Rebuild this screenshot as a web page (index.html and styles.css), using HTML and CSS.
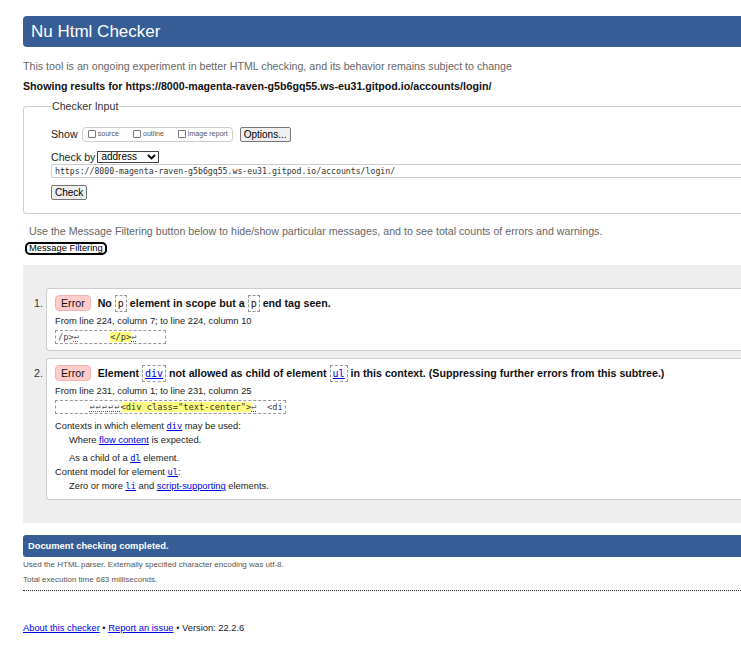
FILE: index.html
```html
<!DOCTYPE html>
<html lang="en">
<head>
<meta charset="utf-8">
<title>Nu Html Checker</title>
<link rel="stylesheet" href="styles.css">
</head>
<body>
<div class="page">
  <h1 class="banner">Nu Html Checker</h1>
  <p class="intro">This tool is an ongoing experiment in better HTML checking, and its behavior remains subject to change</p>
  <p class="showing">Showing results for https://8000-magenta-raven-g5b6gq55.ws-eu31.gitpod.io/accounts/login/</p>

  <form class="checker-form">
    <fieldset class="checker">
      <legend>Checker Input</legend>
      <div class="row show-row">
        <span class="label">Show</span>
        <span class="opts">
          <span class="opt"><span class="cb"></span>source</span>
          <span class="opt"><span class="cb"></span>outline</span>
          <span class="opt"><span class="cb"></span>image report</span>
        </span>
        <button type="button" class="btn">Options...</button>
      </div>
      <div class="row by-row">
        <span class="label">Check by</span>
        <span class="select">address<svg class="chev" width="9" height="6" viewBox="0 0 9 6"><polyline points="1,1 4.5,4.5 8,1" fill="none" stroke="#000" stroke-width="1.8"/></svg></span>
      </div>
      <div class="url">https://8000-magenta-raven-g5b6gq55.ws-eu31.gitpod.io/accounts/login/</div>
      <div class="check-row"><button type="button" class="btn">Check</button></div>
    </fieldset>
  </form>

  <p class="filter-note">Use the Message Filtering button below to hide/show particular messages, and to see total counts of errors and warnings.</p>
  <button type="button" class="filter-btn">Message Filtering</button>

  <div class="results">
    <ol class="messages">
      <li class="msg">
        <span class="num">1.</span>
        <div class="box">
          <p class="title"><strong class="badge">Error</strong> No <code class="q">p</code> element in scope but a <code class="q">p</code> end tag seen.</p>
          <p class="loc">From line 224, column 7; to line 224, column 10</p>
          <p class="extract"><code>/p&gt;<span class="lf">↩</span>      <b class="hl">&lt;/p&gt;</b><span class="lf">↩</span>     </code></p>
        </div>
      </li>
      <li class="msg">
        <span class="num">2.</span>
        <div class="box">
          <p class="title"><strong class="badge">Error</strong> Element <a class="q" href="#">div</a> not allowed as child of element <a class="q" href="#">ul</a> in this context. (Suppressing further errors from this subtree.)</p>
          <p class="loc">From line 231, column 1; to line 231, column 25</p>
          <p class="extract"><code>      <span class="lf arrows">↩↩↩↩↩</span><b class="hl">&lt;div class="text-center"&gt;</b><span class="lf">↩</span>  &lt;di</code></p>
          <dl class="ctx">
            <dt>Contexts in which element <a class="mono" href="#">div</a> may be used:</dt>
            <dd>Where <a href="#">flow content</a> is expected.</dd>
            <dd class="gap">As a child of a <a class="mono" href="#">dl</a> element.</dd>
            <dt>Content model for element <a class="mono" href="#">ul</a>:</dt>
            <dd>Zero or more <a class="mono" href="#">li</a> and <a href="#">script-supporting</a> elements.</dd>
          </dl>
        </div>
      </li>
    </ol>
  </div>

  <h2 class="status">Document checking completed.</h2>
  <div class="details">
    <p>Used the HTML parser. Externally specified character encoding was utf-8.</p>
    <p class="second">Total execution time 683 milliseconds.</p>
  </div>

  <p class="footer"><a href="#">About this checker</a> • <a href="#">Report an issue</a> • Version: 22.2.6</p>
</div>
</body>
</html>
```

FILE: styles.css
```css
html {
  overflow: hidden;
}

body {
  margin: 0;
  font-family: "Liberation Sans", Arial, sans-serif;
  font-size: 10.67px;
  color: #222;
  background: #fff;
}

.page {
  margin-left: 23px;
  width: 780px;
}

a {
  color: #0000ee;
}

.banner {
  margin: 16px 0 0;
  height: 31px;
  line-height: 31px;
  padding-left: 8px;
  background: #365d95;
  color: #fff;
  font-size: 17px;
  font-weight: normal;
  border-radius: 4px;
}

.intro {
  margin: 13px 0 0;
  line-height: 12px;
  color: #666;
}

.showing {
  margin: 8px 0 0;
  line-height: 12px;
  font-weight: bold;
  color: #111;
}

.checker-form {
  margin: 8px 0 0;
}

.checker {
  margin: 0;
  min-width: 0;
  padding: 13px 0 13px 27px;
  border: 1px solid #ccc;
  border-radius: 3px;
}

.checker legend {
  padding: 0 1px;
  line-height: 13px;
  color: #333;
}

.row {
  display: flex;
  align-items: center;
}

.show-row {
  height: 16px;
}

.label {
  margin-right: 4px;
}

.opts {
  display: flex;
  align-items: center;
  height: 13px;
  border: 1px solid #ccc;
  border-radius: 4px;
  padding: 0 4px 0 5px;
  font-size: 7.1px;
  color: #555;
}

.opt {
  display: flex;
  align-items: center;
}

.opt + .opt {
  margin-left: 14px;
}

.cb {
  width: 6px;
  height: 6px;
  border: 1px solid #777;
  border-radius: 1px;
  margin-right: 2px;
}

.btn {
  font-family: "Liberation Sans", Arial, sans-serif;
  font-size: 10px;
  color: #000;
  background: #efefef;
  border: 1px solid #767676;
  border-radius: 2px;
  padding: 0 3px;
  height: 15px;
  line-height: 13px;
  margin: 0;
}

.show-row .btn {
  margin-left: 7px;
}

.by-row {
  margin-top: 8px;
  height: 13px;
}

.by-row .label {
  margin-right: 2px;
}

.select {
  display: flex;
  align-items: center;
  justify-content: space-between;
  box-sizing: border-box;
  width: 62px;
  height: 12px;
  padding: 0 2px 0 3px;
  border: 1px solid #444;
  font-size: 10px;
  color: #000;
  line-height: 10px;
}

.url {
  margin-top: 1px;
  box-sizing: border-box;
  height: 14px;
  padding-left: 3px;
  border: 1px solid #ccc;
  border-right: none;
  border-radius: 2px 0 0 2px;
  font-family: "DejaVu Sans Mono", monospace;
  font-size: 8.2px;
  line-height: 12px;
  color: #333;
  white-space: nowrap;
}

.check-row {
  margin-top: 7px;
  display: flex;
}

.filter-note {
  margin: 11px 0 0;
  padding-left: 6px;
  line-height: 12px;
  color: #666;
}

.filter-btn {
  display: block;
  margin: 5px 0 0 2px;
  height: 13px;
  padding: 0 2px;
  border: 2px solid #000;
  border-radius: 5px;
  background: #fff;
  color: #000;
  font-family: "Liberation Sans", Arial, sans-serif;
  font-size: 9.33px;
  line-height: 9px;
}

.results {
  margin-top: 10px;
  padding: 23px 0;
  background: #eee;
}

.messages {
  list-style: none;
  margin: 0;
  padding: 0;
}

.msg {
  display: grid;
  grid-template-columns: 23px 1fr;
}

.msg + .msg {
  margin-top: 7px;
}

.num {
  padding-top: 7px;
  padding-right: 3px;
  text-align: right;
  line-height: 17px;
  color: #333;
}

.box {
  background: #fff;
  border: 1px solid #ccc;
  border-right: none;
  border-radius: 4px 0 0 4px;
  padding: 6px 0 6px 8px;
}

.box p {
  margin: 0;
}

.title {
  line-height: 17px;
  font-weight: bold;
  color: #111;
  white-space: nowrap;
}

.badge {
  display: inline-block;
  vertical-align: top;
  height: 16px;
  box-sizing: border-box;
  line-height: 14px;
  padding: 0 5px;
  margin-right: 4px;
  background: #fcc;
  border: 1px solid #f0b4b4;
  border-radius: 4px;
  font-weight: normal;
  color: #111;
}

.q {
  display: inline-block;
  vertical-align: top;
  line-height: 15px;
  padding: 0 2px;
  border: 1px dashed #999;
  font-family: "DejaVu Sans Mono", monospace;
  font-size: 10px;
  font-weight: normal;
}

code.q {
  color: #222;
}

.box p.loc {
  margin-top: 3px;
  line-height: 12px;
  font-size: 9.33px;
  color: #222;
}

.box p.extract {
  display: flex;
  margin-top: 3px;
}

.extract code {
  display: block;
  line-height: 12px;
  padding: 0 2px;
  border: 1px dashed #999;
  font-family: "DejaVu Sans Mono", monospace;
  font-size: 8.7px;
  white-space: pre;
  color: #444;
}

.hl {
  font-weight: normal;
  background: #ffff80;
  color: #333;
}

.lf {
  text-decoration: underline dotted;
  color: #555;
}

.arrows {
  letter-spacing: 1px;
}

.ctx {
  margin: 5px 0 0;
  font-size: 9.33px;
  line-height: 14px;
  color: #222;
}

.ctx dd {
  margin: 0 0 0 14px;
}

.ctx dd.gap {
  margin-top: 4px;
}

.mono {
  font-family: "DejaVu Sans Mono", monospace;
  font-size: 8.7px;
}

.status {
  margin: 12px 0 0;
  height: 22px;
  line-height: 22px;
  padding-left: 5px;
  background: #365d95;
  color: #fff;
  font-size: 9.33px;
  font-weight: bold;
  border-radius: 3px;
}

.details {
  padding-bottom: 5px;
  border-bottom: 1px dotted #333;
  font-size: 8px;
  color: #555;
}

.details p {
  margin: 3px 0 0;
  line-height: 10px;
}

.details p.second {
  margin-top: 5px;
}

.footer {
  margin: 31px 0 0;
  font-size: 9.33px;
  line-height: 12px;
  color: #222;
}
```
